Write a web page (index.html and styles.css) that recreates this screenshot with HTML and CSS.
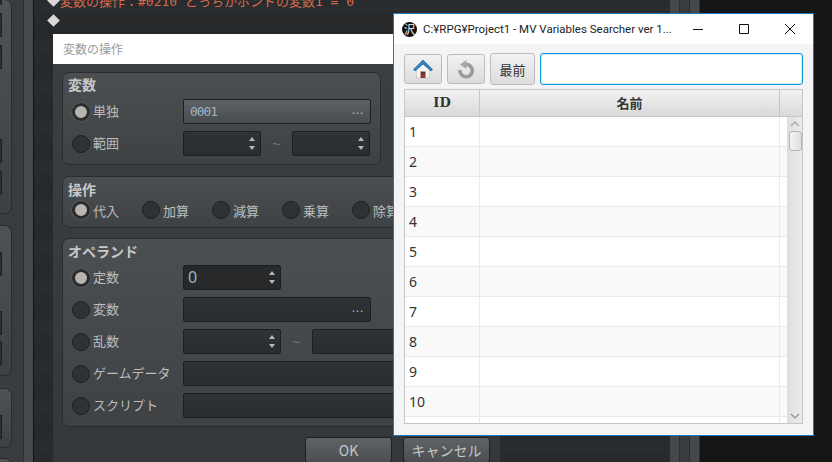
FILE: index.html
```html
<!DOCTYPE html>
<html lang="ja">
<head>
    <meta charset="UTF-8">
    <title>MV Variables Searcher</title>
    <link rel="stylesheet" href="styles.css">
</head>
<body>
<div id="desktop">
    <!-- editor behind the windows -->
    <div id="editor">
        <div id="side-panel">
            <div class="side-group side-first">
                <span class="stub stub-a"></span>
                <span class="stub stub-b"></span>
                <span class="stub stub-b"></span>
                <span class="stub stub-c"></span>
                <span class="stub stub-b"></span>
            </div>
            <div class="side-group side-second">
                <span class="stub stub-d"></span>
                <span class="stub stub-e"></span>
                <span class="stub stub-f"></span>
            </div>
            <div class="side-group side-third">
                <span class="stub stub-d"></span>
            </div>
            <div class="side-group side-fourth"></div>
        </div>
        <div class="side-col"></div>
        <div class="side-col side-light"></div>
        <div id="event-list">
            <div class="event-row event-text"><span class="diamond"></span>変数の操作：#0210 どっちかボンドの変数1 = 0</div>
            <div class="event-row"><span class="diamond"></span></div>
        </div>
        <div class="side-col side-light right-col"></div>
        <div class="side-col right-col"></div>
        <div class="side-col side-light right-col"></div>
    </div>

    <!-- variable operation dialog -->
    <div id="dialog">
        <div class="dialog-title">変数の操作</div>
        <div class="dialog-body">
            <div class="group group-var">
                <div class="group-title">変数</div>
                <div class="form-rows">
                    <div class="form-row">
                        <label class="radio-label"><span class="radio checked"></span>単独</label>
                        <div class="field field-light field-wide mono">0001<span class="dots">…</span></div>
                    </div>
                    <div class="form-row">
                        <label class="radio-label"><span class="radio"></span>範囲</label>
                        <div class="range">
                            <div class="field spin spin-short"></div>
                            <span class="tilde">~</span>
                            <div class="field spin spin-short"></div>
                        </div>
                    </div>
                </div>
            </div>
            <div class="group group-op">
                <div class="group-title">操作</div>
                <div class="op-row">
                    <label class="radio-label"><span class="radio checked"></span>代入</label>
                    <label class="radio-label"><span class="radio"></span>加算</label>
                    <label class="radio-label"><span class="radio"></span>減算</label>
                    <label class="radio-label"><span class="radio"></span>乗算</label>
                    <label class="radio-label"><span class="radio"></span>除算</label>
                </div>
            </div>
            <div class="group group-operand">
                <div class="group-title">オペランド</div>
                <div class="form-rows">
                    <div class="form-row">
                        <label class="radio-label"><span class="radio checked"></span>定数</label>
                        <div class="field spin spin-long field-black value">0</div>
                    </div>
                    <div class="form-row">
                        <label class="radio-label"><span class="radio"></span>変数</label>
                        <div class="field field-wide">&nbsp;<span class="dots">…</span></div>
                    </div>
                    <div class="form-row">
                        <label class="radio-label"><span class="radio"></span>乱数</label>
                        <div class="range">
                            <div class="field spin spin-long"></div>
                            <span class="tilde tilde-long">~</span>
                            <div class="field spin spin-long"></div>
                        </div>
                    </div>
                    <div class="form-row">
                        <label class="radio-label"><span class="radio"></span>ゲームデータ</label>
                        <div class="field field-full"></div>
                    </div>
                    <div class="form-row">
                        <label class="radio-label"><span class="radio"></span>スクリプト</label>
                        <div class="field field-full"></div>
                    </div>
                </div>
            </div>
            <div class="dialog-buttons">
                <div class="dialog-btn">OK</div>
                <div class="dialog-btn">キャンセル</div>
            </div>
        </div>
    </div>

    <!-- searcher window -->
    <div id="searcher">
        <div class="title-bar">
            <span class="app-logo">沢</span>
            <span class="app-title">C:¥RPG¥Project1 - MV Variables Searcher ver 1...</span>
            <div class="win-controls">
                <svg width="46" height="30" viewBox="0 0 46 30"><path d="M18 15.5h10" stroke="#111" fill="none"/></svg>
                <svg width="46" height="30" viewBox="0 0 46 30"><path d="M18.5 10.5h9v9h-9z" stroke="#111" fill="none"/></svg>
                <svg width="46" height="30" viewBox="0 0 46 30"><path d="M18 10l10 10M28 10l-10 10" stroke="#111" fill="none"/></svg>
            </div>
        </div>
        <div class="toolbar">
            <div class="tool-btn">
                <svg width="20" height="20" viewBox="0 0 20 20">
                    <path d="M3.500 9v10h13V9L10 3z" fill="#f6f6f6" stroke="#bbb" stroke-width=".6"/>
                    <path d="M7.500 12.500h5V19h-5z" fill="#8b3a32"/>
                    <path d="M8 13h4v1.500H8z" fill="#5b2b28"/>
                    <path d="M.5 10.500L10 1l9.500 9.500-1.500 1.500L10 5 2 12z" fill="#2f86c4" stroke="#1b5f96" stroke-width=".7"/>
                </svg>
            </div>
            <div class="tool-btn">
                <svg width="20" height="20" viewBox="0 0 20 20">
                    <path d="M7 6.200A6.200 6.200 0 1 1 3.900 11" fill="none" stroke="#9b9b9b" stroke-width="3.600"/>
                    <path d="M10.500 1v9L4 5.500z" fill="#a6a6a6"/>
                </svg>
            </div>
            <div class="tool-btn tool-text">最前</div>
            <input class="search-box" type="text">
        </div>
        <div class="table">
            <div class="table-head">
                <div class="head-id">ID</div>
                <div class="head-name">名前</div>
                <div class="head-fill"></div>
            </div>
            <div class="table-body">
                <div class="rows">
                    <div class="row"><div class="cell-id">1</div><div class="cell-name"></div></div>
                    <div class="row"><div class="cell-id">2</div><div class="cell-name"></div></div>
                    <div class="row"><div class="cell-id">3</div><div class="cell-name"></div></div>
                    <div class="row"><div class="cell-id">4</div><div class="cell-name"></div></div>
                    <div class="row"><div class="cell-id">5</div><div class="cell-name"></div></div>
                    <div class="row"><div class="cell-id">6</div><div class="cell-name"></div></div>
                    <div class="row"><div class="cell-id">7</div><div class="cell-name"></div></div>
                    <div class="row"><div class="cell-id">8</div><div class="cell-name"></div></div>
                    <div class="row"><div class="cell-id">9</div><div class="cell-name"></div></div>
                    <div class="row"><div class="cell-id">10</div><div class="cell-name"></div></div>
                    <div class="row"><div class="cell-id"></div><div class="cell-name"></div></div>
                </div>
                <div class="scrollbar">
                    <svg class="scroll-arrow" width="16" height="14" viewBox="0 0 16 14"><path d="M4 9l4-4 4 4" fill="none" stroke="#a8a8a8" stroke-width="1.200"/></svg>
                    <div class="scroll-thumb"></div>
                    <svg class="scroll-arrow scroll-down" width="16" height="14" viewBox="0 0 16 14"><path d="M4 5l4 4 4-4" fill="none" stroke="#8f8f8f" stroke-width="1.200"/></svg>
                </div>
            </div>
        </div>
    </div>
</div>
</body>
</html>
```

FILE: styles.css
```css
*{
    margin: 0;
    padding: 0;
    box-sizing: border-box;
}
body{
    background: #161616;
    overflow: hidden;
    font-family: "Noto Sans CJK JP", "Noto Sans", sans-serif;
}
#desktop{
    width: 832px;
    height: 462px;
    position: relative;
    overflow: hidden;
}

/* editor */
#editor{
    width: 700px;
    height: 462px;
    display: flex;
    background: #3a3d3f;
}
#side-panel{
    width: 12px;
    flex: none;
    overflow: visible;
}
.side-group{
    width: 12px;
    display: flex;
    flex-direction: column;
    align-items: flex-start;
    border: 1px solid #292b2d;
    border-left: 0;
    border-radius: 0 7px 7px 0;
    background: linear-gradient(#505355, #3e4143);
}
.side-first{
    height: 214px;
    margin-bottom: 11px;
    border-top: 0;
}
.side-second{
    height: 151px;
    margin-bottom: 12px;
}
.side-third{
    height: 60px;
    margin-bottom: 10px;
}
.side-fourth{
    height: 40px;
}
.stub{
    display: block;
    width: 2px;
    height: 24px;
    flex: none;
    border: 1px solid #1f2123;
    border-left: 0;
    background: #2c2f31;
}
.stub-a{
    height: 5px;
}
.stub-b{
    margin-top: 8px;
}
.stub-c{
    margin-top: 70px;
}
.stub-d{
    margin-top: 26px;
}
.stub-e{
    margin-top: 35px;
}
.stub-f{
    margin-top: 6px;
}
.side-col{
    width: 12px;
    flex: none;
    background: #393c3e;
    border-right: 1px solid #2c2e30;
}
.side-light{
    width: 10px;
    background: #46494b;
    border-right: 1px solid #111;
}
#event-list{
    flex: 1;
    margin-top: -10px;
    height: 472px;
    padding-left: 15px;
    overflow: hidden;
    background: repeating-linear-gradient(#25282a 0, #2a2e30 20px, #2a2b2d 20px, #26282a 40px);
}
.side-col.right-col{
    width: 10px;
    border-right: 1px solid #2c2e30;
}
.event-row{
    height: 20px;
    display: flex;
    align-items: center;
    font-family: "DejaVu Sans Mono", "Noto Sans CJK JP", monospace;
    font-size: 13px;
    white-space: nowrap;
}
.event-text{
    color: #d9694d;
}
.diamond{
    width: 9px;
    height: 9px;
    margin-right: 2px;
    flex: none;
    background: #d8d8d8;
    transform: rotate(45deg);
}

/* dialog */
#dialog{
    position: absolute;
    left: 53px;
    top: 34px;
    width: 447px;
    height: 428px;
    background: linear-gradient(#3c3f41, #35383a);
    overflow: hidden;
}
.dialog-title{
    height: 30px;
    padding-left: 10px;
    background: #fff;
    color: #9a9a9a;
    font-size: 12px;
    line-height: 29px;
}
.dialog-body{
    padding: 8px 9px 0;
    color: #c4c4c4;
}
.group{
    border: 1px solid #2a2c2e;
    border-radius: 7px;
    background: linear-gradient(#4c4f51, #3f4244);
}
.group-var{
    width: 319px;
    height: 93px;
    margin-bottom: 11px;
}
.group-op{
    height: 52px;
    margin-bottom: 10px;
}
.group-operand{
    height: 189px;
}
.group-title{
    padding-left: 5px;
    font-size: 14px;
    font-weight: 700;
    line-height: 20px;
    color: #c8c8c8;
}
.group-var .group-title{
    height: 26px;
    padding-top: 1px;
}
.group-op .group-title{
    height: 23px;
    padding-top: 2px;
}
.group-operand .group-title{
    height: 26px;
    padding-top: 2px;
}
.form-rows{
    display: flex;
    flex-direction: column;
    gap: 7px;
    padding-left: 9px;
}
.form-row{
    display: grid;
    grid-template-columns: 111px auto;
    align-items: center;
    height: 25px;
}
.radio-label{
    display: flex;
    align-items: center;
    gap: 3px;
    font-size: 13px;
    color: #bdbdbd;
    white-space: nowrap;
}
.form-row .radio-label{
    padding-bottom: 2px;
}
.form-row .radio{
    margin-top: 2px;
}
.radio{
    width: 18px;
    height: 18px;
    flex: none;
    border: 1px solid #1e2022;
    border-radius: 50%;
    background: #2f3234;
}
.radio.checked{
    border: 3px solid #2a2c2e;
    background: #b8b5b0;
    box-shadow: 0 0 0 1px #55585a;
}
.op-row{
    display: grid;
    grid-template-columns: repeat(5, 70px);
    padding-left: 9px;
    height: 20px;
    align-items: center;
}
.field{
    position: relative;
    height: 25px;
    border: 1px solid #1c1e20;
    border-radius: 2px;
    background: linear-gradient(#303335, #2b2e30);
    color: #9db4c8;
    font-size: 14px;
    line-height: 23px;
    padding-left: 6px;
}
.field-light{
    background: linear-gradient(#5e6164, #4a4d4f);
}
.field-wide{
    width: 188px;
}
.field-full{
    width: 298px;
}
.field-black{
    background: #26282a;
}
.mono{
    font-family: "DejaVu Sans Mono", monospace;
    font-size: 13px;
    letter-spacing: -1.1px;
    line-height: 24px;
}
.value{
    font-family: "Noto Sans", sans-serif;
    font-size: 16px;
    padding-left: 4px;
}
.dots{
    position: absolute;
    right: 6px;
    top: -2px;
    color: #bbb;
    font-family: "Liberation Sans", sans-serif;
    font-size: 13px;
    letter-spacing: 0;
}
.range{
    display: flex;
    align-items: center;
}
.tilde{
    width: 31px;
    text-align: center;
    color: #777;
    font-family: "Liberation Sans", sans-serif;
    font-size: 15px;
}
.tilde-long{
    width: 31px;
}
.spin-short{
    width: 78px;
}
.spin-long{
    width: 98px;
}
.spin::before,
.spin::after{
    content: "";
    position: absolute;
    right: 5px;
    border-left: 3.5px solid transparent;
    border-right: 3.5px solid transparent;
}
.spin::before{
    top: 5px;
    border-bottom: 4px solid #b8b8b8;
}
.spin::after{
    bottom: 5px;
    border-top: 4px solid #b8b8b8;
}
.dialog-buttons{
    display: flex;
    justify-content: flex-end;
    gap: 11px;
    margin-top: 10px;
    padding-right: 1px;
}
.dialog-btn{
    width: 87px;
    height: 26px;
    border: 1px solid #1e2022;
    border-radius: 3px;
    background: linear-gradient(#606366, #4c4f51);
    color: #c6c6c6;
    font-size: 14px;
    line-height: 24px;
    text-align: center;
}

/* searcher window */
#searcher{
    position: absolute;
    left: 393px;
    top: 13px;
    width: 421px;
    height: 423px;
    background: #f4f4f4;
    border: 1px solid #1c79bf;
    font-family: "Noto Sans", "Noto Sans CJK JP", sans-serif;
}
.title-bar{
    height: 30px;
    display: flex;
    align-items: center;
    background: #fff;
    padding-left: 8px;
}
.app-logo{
    width: 15px;
    height: 15px;
    flex: none;
    border-radius: 50%;
    background: #111;
    color: #fff;
    font-family: "Noto Sans CJK JP", sans-serif;
    font-size: 11px;
    line-height: 15px;
    text-align: center;
}
.app-title{
    margin-left: 6px;
    font-family: "Roboto", sans-serif;
    font-size: 11.5px;
    color: #222;
    white-space: nowrap;
}
.win-controls{
    display: flex;
    flex: none;
    margin-left: auto;
}
.toolbar{
    display: flex;
    align-items: center;
    gap: 5px;
    padding: 9px 10px 4px;
    height: 45px;
}
.tool-btn{
    width: 38px;
    height: 30px;
    display: flex;
    align-items: center;
    justify-content: center;
    border: 1px solid #bdbdbd;
    border-radius: 3px;
    background: linear-gradient(#f2f2f2, #dcdcdc);
}
.tool-text{
    width: 45px;
    height: 32px;
    font-family: "Noto Sans CJK JP", sans-serif;
    font-size: 13px;
    color: #333;
}
.search-box{
    flex: 1;
    height: 32px;
    min-width: 0;
    border: 1px solid #0f9ad6;
    border-radius: 3px;
    background: #fff;
    box-shadow: inset 0 0 0 1px #cfeaf6;
    outline: 0;
}
.table{
    margin-left: 10px;
    width: 399px;
    height: 335px;
    border: 1px solid #c6c6c6;
    background: #fff;
    overflow: hidden;
}
.table-head{
    display: flex;
    height: 27px;
    background: linear-gradient(#f2f2f2, #d9d9d9);
    border-bottom: 1px solid #c6c6c6;
    color: #333;
    font-size: 13px;
    font-weight: 700;
    line-height: 25px;
    text-align: center;
}
.head-id{
    width: 75px;
    border-right: 1px solid #c6c6c6;
    font-family: "DejaVu Serif", serif;
    font-size: 13px;
}
.head-name{
    width: 300px;
    border-right: 1px solid #c6c6c6;
    font-family: "Noto Sans CJK JP", sans-serif;
}
.head-fill{
    flex: 1;
}
.table-body{
    display: flex;
    height: 306px;
}
.rows{
    width: 382px;
    overflow: hidden;
    flex: none;
}
.row{
    display: flex;
    height: 30px;
    border-bottom: 1px solid #eaeaea;
}
.row:nth-child(even){
    background: #f9f9f9;
}
.cell-id{
    width: 75px;
    padding-left: 4px;
    border-right: 1px solid #eaeaea;
    color: #333;
    font-size: 14px;
    line-height: 30px;
}
.cell-name{
    width: 300px;
    border-right: 1px solid #eaeaea;
}
.scrollbar{
    flex: 1;
    display: flex;
    flex-direction: column;
    align-items: center;
    background: linear-gradient(90deg, #dedede, #ececec);
}
.scroll-arrow{
    flex: none;
}
.scroll-thumb{
    width: 13px;
    height: 20px;
    border: 1px solid #b4b4b4;
    border-radius: 3px;
    background: linear-gradient(90deg, #f4f4f4, #dedede);
}
.scroll-down{
    margin-top: auto;
}
```
